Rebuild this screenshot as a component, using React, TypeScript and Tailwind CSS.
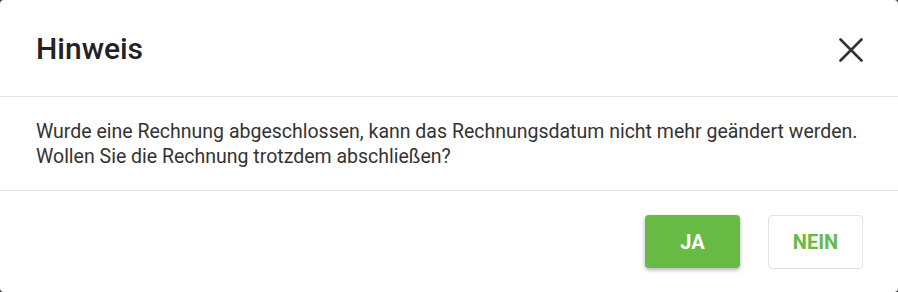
export default function App() {
  return (
    <div className="w-[898px] h-[292px] bg-[#3a3a3a]" style={{ fontFamily: 'Roboto, "Noto Sans", sans-serif' }}>
      <div className="flex h-full w-full flex-col rounded-[4px] bg-white">
        <div className="flex h-[97px] items-center justify-between border-b border-[#e3e3e3] pl-9 pr-[35px]">
          <h2 className="text-[30px] font-medium text-[#222]">Hinweis</h2>
          <button className="mt-[3px] text-[#333]">
            <svg width="24" height="24" viewBox="0 0 24 24" fill="none" stroke="currentColor" strokeWidth="2.6" strokeLinecap="round">
              <path d="M1.5 1.5L22.5 22.5M22.5 1.5L1.5 22.5" />
            </svg>
          </button>
        </div>
        <div className="flex h-[94px] flex-col justify-center border-b border-[#e3e3e3] px-9 text-[19.5px] leading-[25px] text-[#333]">
          <p>Wurde eine Rechnung abgeschlossen, kann das Rechnungsdatum nicht mehr geändert werden.</p>
          <p>Wollen Sie die Rechnung trotzdem abschließen?</p>
        </div>
        <div className="flex flex-1 items-center justify-end gap-[28px] pr-[35px]">
          <button className="h-[53px] w-[95px] rounded-[4px] bg-[#67bb44] text-[20px] font-bold text-white shadow-[0_2px_4px_rgba(0,0,0,0.3)]">
            JA
          </button>
          <button className="h-[54px] w-[95px] rounded-[4px] border border-[#e3e3e3] bg-white text-[20px] font-bold text-[#67bb44]">
            NEIN
          </button>
        </div>
      </div>
    </div>
  );
}
